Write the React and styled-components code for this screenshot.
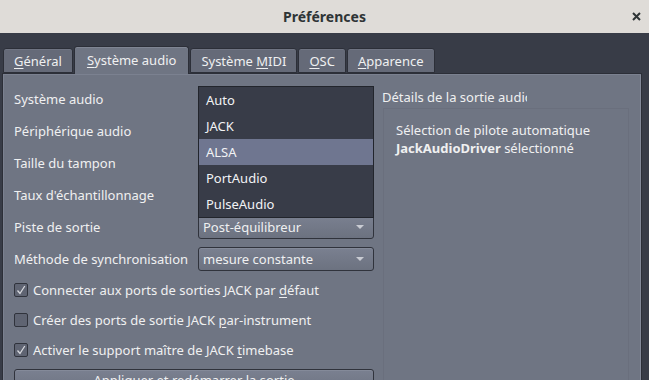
import React from 'react';
import styled, { createGlobalStyle } from 'styled-components';

const GlobalStyle = createGlobalStyle`
  html, body { margin: 0; padding: 0; background: #383c47; }
  body {
    font-family: "Noto Sans", "Open Sans", "DejaVu Sans", sans-serif;
    font-size: 13px;
    color: #eff0f1;
  }
  #root { width: 649px; height: 380px; overflow: hidden; }
`;

const Window = styled.div`
  display: flex;
  flex-direction: column;
  width: 649px;
  height: 380px;
  overflow: hidden;
  background: #383c47;
`;

const TitleBar = styled.div`
  flex: none;
  height: 33px;
  display: grid;
  grid-template-columns: 1fr auto 1fr;
  align-items: center;
  background: #dfdcd8;
  color: #2e3436;
`;

const Title = styled.div`
  grid-column: 2;
  font-weight: 700;
  font-size: 14px;
`;

const Close = styled.div`
  justify-self: end;
  display: flex;
  padding-right: 8px;
`;

const Body = styled.div`
  flex: 1;
  display: flex;
  flex-direction: column;
  padding: 13px 7px 0 2px;
  min-height: 0;
`;

const TabBar = styled.div`
  display: flex;
  align-items: flex-end;
  gap: 1px;
  padding-left: 1px;
  height: 27px;
  position: relative;
  z-index: 1;
`;

const Tab = styled.div`
  box-sizing: border-box;
  height: ${p => (p.$active ? 28 : 25)}px;
  margin-bottom: ${p => (p.$active ? -1 : 0)}px;
  padding: 0 ${p => (p.$active ? 12 : 10)}px ${p => (p.$active ? 2 : 0)}px;
  display: flex;
  align-items: center;
  background: ${p => (p.$active ? '#6f7583' : '#656a78')};
  border: 1px solid #2c2f38;
  border-bottom: ${p => (p.$active ? 'none' : '1px solid #2c2f38')};
  border-radius: 3px 3px 0 0;
  box-shadow: inset 0 1px 0 ${p => (p.$active ? '#7f8593' : '#6f7482')};
  color: #eff0f1;
  white-space: nowrap;
`;

const Mn = styled.span`
  text-decoration: underline;
  text-underline-offset: 2px;
  text-decoration-thickness: 1px;
`;

const Pane = styled.div`
  flex: 1;
  box-sizing: border-box;
  border: 1px solid #2c2f38;
  border-bottom: none;
  background: #6f7583;
  box-shadow: inset 1px 1px 0 #7b8190, inset -1px 0 0 #838998;
  padding: 13px 11px 0 11px;
  display: grid;
  grid-template-columns: 360px 1fr;
  column-gap: 8px;
  align-items: start;
`;

const LeftCol = styled.div`
  display: flex;
  flex-direction: column;
  gap: 8px;
`;

const FormRow = styled.div`
  display: grid;
  grid-template-columns: 184px 176px;
  height: 24px;
  align-items: center;
`;

const Label = styled.div`
  white-space: nowrap;
`;

const ComboWrap = styled.div`
  position: relative;
  height: 24px;
`;

const Combo = styled.div`
  box-sizing: border-box;
  height: 24px;
  border: 1px solid #30333c;
  border-radius: 3px;
  background: linear-gradient(#7a8090, #6c7280);
  box-shadow: inset 0 1px 0 #848a99;
  padding: 0 9px 0 4px;
  display: flex;
  align-items: center;
  justify-content: space-between;
  white-space: nowrap;
`;

const Arrow = styled.span`
  width: 0;
  height: 0;
  border-left: 4px solid transparent;
  border-right: 4px solid transparent;
  border-top: 4px solid #c9ccd3;
`;

const Popup = styled.div`
  position: absolute;
  top: -1px;
  left: 0;
  width: 176px;
  box-sizing: border-box;
  border: 1px solid #22252c;
  background: #383c48;
  z-index: 5;
`;

const PopItem = styled.div`
  height: 26px;
  display: flex;
  align-items: center;
  padding-left: 7px;
  background: ${p => (p.$hl ? '#6f7690' : 'transparent')};
  color: #f2f3f5;
`;

const CheckRow = styled.div`
  height: 22px;
  display: flex;
  align-items: center;
  gap: 5px;
  white-space: nowrap;
`;

const Box = styled.span`
  box-sizing: border-box;
  width: 14px;
  height: 14px;
  border: 1px solid #30333c;
  border-radius: 2px;
  background: #5f6472;
  display: flex;
  align-items: center;
  justify-content: center;
`;

const Button = styled.div`
  box-sizing: border-box;
  height: 26px;
  border: 1px solid #30333c;
  border-radius: 3px;
  background: linear-gradient(#7a8090, #6c7280);
  box-shadow: inset 0 1px 0 #848a99;
  display: flex;
  align-items: flex-start;
  justify-content: center;
  padding-top: 1px;
  line-height: 18px;
`;

const RightCol = styled.div`
  display: flex;
  flex-direction: column;
  height: 100%;
`;

const GroupTitle = styled.div`
  margin-top: 1px;
  height: 18px;
  line-height: 18px;
  width: 145px;
  overflow: hidden;
  white-space: nowrap;
`;

const GroupFrame = styled.div`
  flex: 1;
  margin: 2px 1px 0 1px;
  border: 1px solid #6a6f7d;
  border-bottom: none;
  padding: 12px 12px 0 12px;
  line-height: 18px;
`;

const Check = () => (
  <svg width="10" height="10" viewBox="0 0 10 10">
    <polyline points="1.5,5.5 4,8.5 8.8,1" fill="none" stroke="#d6d8dd" strokeWidth="1.3" />
  </svg>
);

const CheckBox = ({ checked, children }) => (
  <CheckRow>
    <Box>{checked && <Check />}</Box>
    <span>{children}</span>
  </CheckRow>
);

export default function App() {
  return (
    <>
      <GlobalStyle />
      <Window>
        <TitleBar>
          <Title>Préférences</Title>
          <Close>
            <svg width="9" height="9" viewBox="0 0 9 9">
              <path d="M1 1 L8 8 M8 1 L1 8" stroke="#2e3436" strokeWidth="2" />
            </svg>
          </Close>
        </TitleBar>
        <Body>
          <TabBar>
            <Tab><span><Mn>G</Mn>énéral</span></Tab>
            <Tab $active><span><Mn>S</Mn>ystème audio</span></Tab>
            <Tab><span>Système <Mn>M</Mn>IDI</span></Tab>
            <Tab><span><Mn>O</Mn>SC</span></Tab>
            <Tab><span><Mn>A</Mn>pparence</span></Tab>
          </TabBar>
          <Pane>
            <LeftCol>
              <FormRow>
                <Label>Système audio</Label>
                <ComboWrap>
                  <Combo><span /><Arrow /></Combo>
                  <Popup>
                    <PopItem>Auto</PopItem>
                    <PopItem>JACK</PopItem>
                    <PopItem $hl>ALSA</PopItem>
                    <PopItem>PortAudio</PopItem>
                    <PopItem>PulseAudio</PopItem>
                  </Popup>
                </ComboWrap>
              </FormRow>
              <FormRow>
                <Label>Périphérique audio</Label>
                <ComboWrap><Combo><span /><Arrow /></Combo></ComboWrap>
              </FormRow>
              <FormRow>
                <Label>Taille du tampon</Label>
                <ComboWrap><Combo><span /><Arrow /></Combo></ComboWrap>
              </FormRow>
              <FormRow>
                <Label>Taux d'échantillonnage</Label>
                <ComboWrap><Combo><span /><Arrow /></Combo></ComboWrap>
              </FormRow>
              <FormRow>
                <Label>Piste de sortie</Label>
                <ComboWrap><Combo><span>Post-équilibreur</span><Arrow /></Combo></ComboWrap>
              </FormRow>
              <FormRow>
                <Label>Méthode de synchronisation</Label>
                <ComboWrap><Combo><span>mesure constante</span><Arrow /></Combo></ComboWrap>
              </FormRow>
              <CheckBox checked>Connecter aux ports de sorties JACK par <Mn>d</Mn>éfaut</CheckBox>
              <CheckBox>Créer des ports de sortie JACK <Mn>p</Mn>ar-instrument</CheckBox>
              <CheckBox checked>Activer le support maître de JACK <Mn>t</Mn>imebase</CheckBox>
              <Button>Appliquer et redémarrer la sortie</Button>
            </LeftCol>
            <RightCol>
              <GroupTitle>Détails de la sortie audio</GroupTitle>
              <GroupFrame>
                <div>Sélection de pilote automatique</div>
                <div><b>JackAudioDriver</b> sélectionné</div>
              </GroupFrame>
            </RightCol>
          </Pane>
        </Body>
      </Window>
    </>
  );
}
